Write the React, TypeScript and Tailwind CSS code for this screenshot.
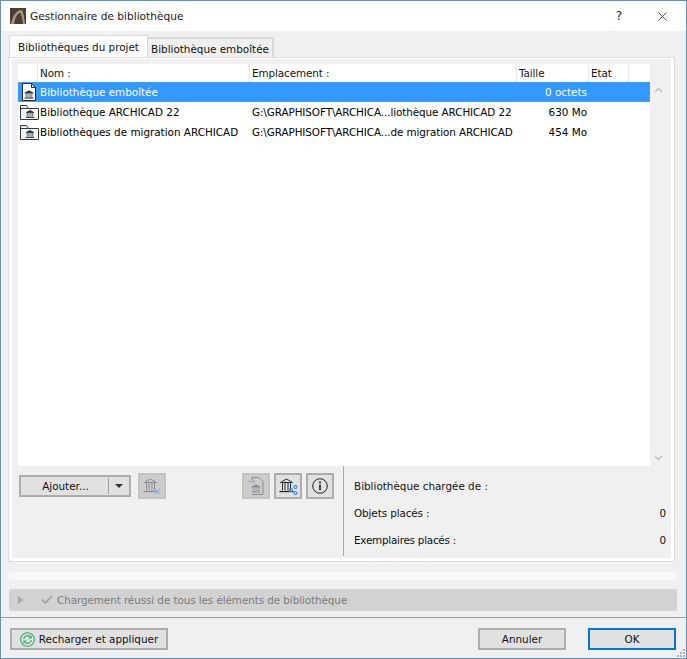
import { X, Check } from "lucide-react";

const fontCls = "font-['DejaVu_Sans',sans-serif] text-[10.4px] leading-[12px]";

function BankIcon({ color = "#1f2a33", className = "" }: { color?: string; className?: string }) {
	return (
		<svg viewBox="0 0 12 10" className={className} fill="none" stroke={color} strokeWidth="0.9">
			<path d="M1 3.2 6 .6l5 2.6z" fill={color} />
			<path d="M2.6 3.6v4.6M4.8 3.6v4.6M7.2 3.6v4.6M9.4 3.6v4.6" />
			<path d="M.8 9.2h10.4" strokeWidth="1.3" />
		</svg>
	);
}

function OutlineBank({ color = "#1f2a33", className = "" }: { color?: string; className?: string }) {
	return (
		<svg viewBox="0 0 15 15" className={className} fill="none" stroke={color} strokeWidth="1">
			<path d="M1.5 4.5 7.5 1l6 3.5z" />
			<path d="M3.5 5v7M6 5v7M9 5v7M11.5 5v7" />
			<path d="M.5 13.5h14" strokeWidth="1.4" />
		</svg>
	);
}

function FileIcon() {
	return (
		<div className="relative h-[18px] w-[14px]">
			<svg viewBox="0 0 14 18" className="absolute inset-0 h-full w-full">
				<path d="M.5.5h9l4 4v13H.5z" fill="#fff" stroke="#1f2a33" />
				<path d="M9.5.5v4h4" fill="none" stroke="#1f2a33" />
			</svg>
			<BankIcon className="absolute left-[2px] top-[7px] h-[9px] w-[10px]" />
		</div>
	);
}

function FolderIcon() {
	return (
		<div className="relative h-[15px] w-[19px]">
			<svg viewBox="0 0 19 15" className="absolute inset-0 h-full w-full">
				<path d="M.5 14.5V.5h6l2 3h9.5q.5 0 .5.5v10q0 .5-.5.5z" fill="#f6f6f6" stroke="#2a3640" />
				<path d="M.5 3.5h8" fill="none" stroke="#2a3640" />
			</svg>
			<BankIcon className="absolute left-[5px] top-[5px] h-[8px] w-[10px]" />
		</div>
	);
}

function Row({ kind, name, place, size, active }: { kind: "file" | "folder"; name: string; place: string; size: string; active?: boolean }) {
	return (
		<div className={`flex h-[20px] items-center ${active ? "bg-[#3399ff] text-white outline-1 -outline-offset-1 outline-dotted outline-[#b98a50]" : "text-black"}`}>
			<div className="flex w-[22px] shrink-0 justify-center">{kind === "file" ? <FileIcon /> : <FolderIcon />}</div>
			<div className="w-[212px] shrink-0 whitespace-nowrap">{name}</div>
			<div className="w-[267px] shrink-0 whitespace-nowrap tracking-[-0.09px]">{place}</div>
			<div className="w-[68px] shrink-0 whitespace-nowrap text-right">{size}</div>
		</div>
	);
}

function HeadCell({ w, children }: { w: string; children?: string }) {
	return <div className={`flex h-full shrink-0 items-center border-r border-[#e8e8e8] pl-[2px] tracking-[-0.1px] ${w}`}>{children}</div>;
}

function IconBtn({ disabled, children }: { disabled?: boolean; children: React.ReactNode }) {
	return (
		<div className={`flex h-[26px] w-[28px] items-center justify-center border-2 ${disabled ? "border-[#c4c4c4] bg-[#cccccc]" : "border-[#adadad] bg-[#e1e1e1]"}`}>
			{children}
		</div>
	);
}

function PushBtn({ className = "", children }: { className?: string; children: React.ReactNode }) {
	return <div className={`flex h-[22px] items-center justify-center border-2 border-[#adadad] bg-[#e1e1e1] ${className}`}>{children}</div>;
}

export default function App() {
	return (
		<div className={`flex h-[659px] w-[687px] flex-col overflow-hidden border border-[#6d8fae] bg-[#f0f0f0] text-[#111] ${fontCls}`}>
			<div className="flex h-[30px] shrink-0 items-center bg-white pl-[9px] pr-[16px]">
				<svg viewBox="0 0 16 16" className="h-[16px] w-[16px]">
					<rect width="16" height="16" fill="#4a4032" />
					<path d="M1 16C3 7 7 2 11 2c2 0 3 5 4 14h-2C12 9 11 5 10 5 7 5 5 10 4 16z" fill="#a8977c" />
				</svg>
				<span className="ml-[4px] text-[10.6px] text-[#222]">Gestionnaire de bibliothèque</span>
				<span className="ml-auto mr-[33px] text-[12px] text-[#222]">?</span>
				<X size={15} strokeWidth={1.2} color="#222" />
			</div>

			<div className="flex h-[27px] shrink-0 items-end pl-[8px]">
				<div className="flex h-[23px] w-[139px] items-center justify-center border border-b-0 border-[#d9d9d9] bg-white pb-[1px]">Bibliothèques du projet</div>
				<div className="flex h-[21px] w-[126px] items-center justify-center border-2 border-b-0 border-l-0 border-[#d9d9d9] bg-[#f0f0f0]">Bibliothèque emboîtée</div>
			</div>

			<div className="ml-[8px] mr-[12px] flex h-[503px] shrink-0 flex-col border-x-[3px] border-b-[3px] border-t border-white bg-[#f0f0f0] pl-[6px] pt-[5px] outline-1 outline-[#dcdcdc]">
				<div className="flex h-[402px] shrink-0">
					<div className="w-[632px] shrink-0 bg-white">
						<div className="flex h-[18px] items-center">
							<HeadCell w="w-[20px]" />
							<HeadCell w="w-[212px]">Nom :</HeadCell>
							<HeadCell w="w-[267px]">Emplacement :</HeadCell>
							<HeadCell w="w-[72px]">Taille</HeadCell>
							<HeadCell w="w-[40px]">Etat</HeadCell>
						</div>
						<Row kind="file" name="Bibliothèque emboîtée" place="" size="0 octets" active />
						<Row kind="folder" name="Bibliothèque ARCHICAD 22" place="G:\GRAPHISOFT\ARCHICA...liothèque ARCHICAD 22" size="630 Mo" />
						<Row kind="folder" name="Bibliothèques de migration ARCHICAD" place="G:\GRAPHISOFT\ARCHICA...de migration ARCHICAD" size="454 Mo" />
					</div>
					<div className="flex w-[17px] shrink-0 flex-col items-center justify-between pb-[5px] pt-[23px] text-[#c4c4c4]">
						<svg viewBox="0 0 9 6" className="h-[6px] w-[9px]" fill="none" stroke="currentColor" strokeWidth="1.6"><path d="M1 5l3.5-3.5L8 5" /></svg>
						<svg viewBox="0 0 9 6" className="h-[6px] w-[9px]" fill="none" stroke="currentColor" strokeWidth="1.6"><path d="M1 1l3.5 3.5L8 1" /></svg>
					</div>
				</div>

				<div className="flex flex-1">
					<div className="flex w-[325px] shrink-0 items-start pl-px pt-[7px]">
						<div className="mt-[2px] flex h-[22px] w-[112px] items-center border-2 border-[#adadad] bg-[#e1e1e1]">
							<span className="flex-1 pl-[2px] text-center">Ajouter...</span>
							<span className="h-[16px] w-px bg-[#a0a0a0]" />
							<span className="flex w-[20px] justify-center">
								<span className="h-0 w-0 border-x-[4px] border-t-[4px] border-x-transparent border-t-[#333]" />
							</span>
						</div>
						<div className="ml-[7px]">
							<IconBtn disabled>
								<div className="relative h-[17px] w-[18px]">
									<OutlineBank color="#8c8c8c" className="h-[15px] w-[15px]" />
									<svg viewBox="0 0 8 8" className="absolute bottom-0 right-0 h-[7px] w-[7px]" stroke="#8db4e2" strokeWidth="1.2"><path d="M1 1l6 6M7 1L1 7" /></svg>
								</div>
							</IconBtn>
						</div>
						<div className="ml-[76px]">
							<IconBtn disabled>
								<div className="relative h-[18px] w-[16px]">
									<svg viewBox="0 0 16 18" className="absolute inset-0 h-full w-full" fill="none" stroke="#8c8c8c">
										<path d="M4 3V.5h7l4 4v13H4" />
										<path d="M.5 4.5h6M4.5 2l2.2 2.5L4.5 7" stroke="#7fb0ea" />
									</svg>
									<BankIcon color="#8c8c8c" className="absolute bottom-[2px] left-[3px] h-[9px] w-[10px]" />
								</div>
							</IconBtn>
						</div>
						<div className="ml-[4px]">
							<IconBtn>
								<div className="relative h-[17px] w-[19px]">
									<OutlineBank className="h-[15px] w-[15px]" />
									<svg viewBox="0 0 9 10" className="absolute bottom-0 right-0 h-[10px] w-[9px]" fill="none" stroke="#3b82e0" strokeWidth="1.1">
										<circle cx="6.5" cy="2" r="1.5" />
										<circle cx="2" cy="5" r="1.5" />
										<circle cx="6.5" cy="8" r="1.5" />
									</svg>
								</div>
							</IconBtn>
						</div>
						<div className="ml-[4px]">
							<IconBtn>
								<svg viewBox="0 0 16 16" className="h-[16px] w-[16px]" fill="none" stroke="#222">
									<circle cx="8" cy="8" r="7.3" />
									<path d="M8 6.6v5.6" strokeWidth="1.6" />
									<path d="M8 3.4v1.8" strokeWidth="1.8" />
								</svg>
							</IconBtn>
						</div>
					</div>
					<div className="mb-[2px] flex flex-1 flex-col border-l border-[#a8a8a8] pl-[10px] pr-[5px] pt-[6px]">
						<div className="flex h-[27px] items-center"><span>Bibliothèque chargée de :</span></div>
						<div className="flex h-[27px] items-center justify-between"><span className="tracking-[-0.1px]">Objets placés :</span><span>0</span></div>
						<div className="flex h-[27px] items-center justify-between"><span className="tracking-[-0.25px]">Exemplaires placés :</span><span>0</span></div>
					</div>
				</div>
			</div>

			<div className="ml-[8px] mr-[9px] mt-[11px] h-[8px] shrink-0 bg-[#f8f8f8]" />

			<div className="ml-[8px] mr-[9px] mt-[9px] flex h-[22px] shrink-0 items-center rounded-[3px] bg-[#d2d2d2] text-[#7b7b7b]">
				<span className="ml-[9px] h-0 w-0 border-y-[4px] border-l-[5px] border-y-transparent border-l-[#a6a6a6]" />
				<Check size={14} strokeWidth={2.4} color="#9a9a9a" className="ml-[17px]" />
				<span className="ml-[3px] tracking-[-0.08px]">Chargement réussi de tous les éléments de bibliothèque</span>
			</div>

			<div className="relative mt-[6px] flex flex-1 items-start border-t border-[#a0a0a0] pl-[9px] pr-[10px] pt-[10px]">
				<PushBtn className="w-[158px]">
					<svg viewBox="0 0 16 16" className="mr-[4px] h-[15px] w-[15px]" fill="none" stroke="#1fae5c" strokeWidth="1.1">
						<circle cx="8" cy="8" r="7.3" />
						<path d="M4 7.5A4 4 0 0 1 11.5 6M12 8.5A4 4 0 0 1 4.5 10" />
						<path d="M11.8 3.8v2.6H9.2M4.2 12.2V9.6h2.6" />
					</svg>
					<span>Recharger et appliquer</span>
				</PushBtn>
				<PushBtn className="ml-auto w-[88px]">Annuler</PushBtn>
				<div className="ml-[22px] flex h-[22px] w-[88px] items-center justify-center border-2 border-[#0078d7] bg-[#e1e1e1]">OK</div>
				<svg viewBox="0 0 10 10" className="absolute bottom-0 right-0 h-[10px] w-[10px]" fill="#b5b5b5">
					<rect x="7" y="1" width="2" height="2" />
					<rect x="4" y="4" width="2" height="2" />
					<rect x="7" y="4" width="2" height="2" />
					<rect x="1" y="7" width="2" height="2" />
					<rect x="4" y="7" width="2" height="2" />
					<rect x="7" y="7" width="2" height="2" />
				</svg>
			</div>
		</div>
	);
}
